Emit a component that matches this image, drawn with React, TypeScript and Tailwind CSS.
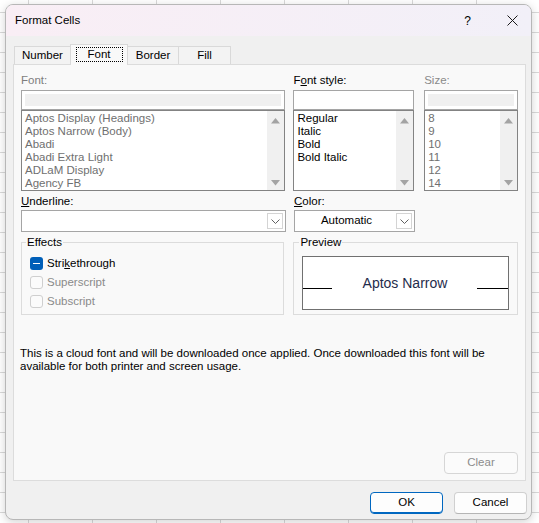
import React from 'react';

const fontItems = [
  'Aptos Display (Headings)',
  'Aptos Narrow (Body)',
  'Abadi',
  'Abadi Extra Light',
  'ADLaM Display',
  'Agency FB',
];
const styleItems = ['Regular', 'Italic', 'Bold', 'Bold Italic'];
const sizeItems = ['8', '9', '10', '11', '12', '14'];

function Arrow({ down }: { down?: boolean }) {
  return (
    <svg width="9" height="6" viewBox="0 0 9 6">
      <path d={down ? 'M0 0 H9 L4.5 5.5 Z' : 'M0 5.5 H9 L4.5 0 Z'} fill="#a3a3a3" />
    </svg>
  );
}

function Chevron() {
  return (
    <svg width="9" height="5" viewBox="0 0 9 5">
      <path d="M0.5 0.5 L4.5 4.5 L8.5 0.5" fill="none" stroke="#606060" strokeWidth="1" />
    </svg>
  );
}

function ListBox({ items, disabled }: { items: string[]; disabled?: boolean }) {
  return (
    <div className="flex h-[81px] border border-[#838383] bg-white">
      <div
        className={`flex-1 pl-[3px] pt-[1px] leading-[13px] ${disabled ? 'text-[#6f6f6f]' : 'text-black'}`}
      >
        {items.map((i) => (
          <div key={i} className="whitespace-nowrap">
            {i}
          </div>
        ))}
      </div>
      <div className="flex w-[17px] flex-col items-center justify-between bg-[#f0f0f0] pb-[4px] pt-[7px]">
        <Arrow />
        <Arrow down />
      </div>
    </div>
  );
}

function Input({ disabled }: { disabled?: boolean }) {
  return (
    <div className="h-[20px] border border-[#a5a5a5] bg-white p-[3px]">
      {disabled && <div className="h-full bg-[#f0f0f0]" />}
    </div>
  );
}

function Check({ label, checked, disabled }: { label: React.ReactNode; checked?: boolean; disabled?: boolean }) {
  return (
    <div className="flex h-[19px] items-center gap-[4px] pl-[8px]">
      {checked ? (
        <div className="flex h-[13px] w-[13px] items-center justify-center rounded-[3px] bg-[#005fb8]">
          <div className="h-[1.5px] w-[7px] bg-white" />
        </div>
      ) : (
        <div className="h-[13px] w-[13px] rounded-[3px] border border-[#cfcfcf] bg-[#fbfbfb]" />
      )}
      <span className={disabled ? 'text-[#8a8a8a]' : 'text-black'}>{label}</span>
    </div>
  );
}

function Tab({ label, active, first }: { label: string; active?: boolean; first?: boolean }) {
  if (active) {
    return (
      <div className="relative z-10 -mb-px -ml-px flex h-[21px] w-[58px] items-center justify-center border-l border-r border-t border-[#d9d9d9] bg-[#f9f9f9] pb-px">
        <span className="flex h-[15px] w-[47px] items-center justify-center border border-dotted border-black leading-none">
          {label}
        </span>
      </div>
    );
  }
  return (
    <div
      className={`flex h-[18px] items-center justify-center border-r border-t border-[#d9d9d9] bg-[#f3f3f3] ${first ? 'w-[57px] border-l' : 'w-[52px]'}`}
    >
      {label}
    </div>
  );
}

export default function App() {
  return (
    <div className="h-[523px] w-[539px] overflow-hidden bg-white bg-[linear-gradient(to_right,#d9d9d9_1px,transparent_1px),linear-gradient(to_bottom,#d9d9d9_1px,transparent_1px)] pl-[5px] pt-[4px] font-['Liberation_Sans',Arial,sans-serif] text-[11.5px] text-black [background-position:28px_12px] [background-size:64px_20px]">
      <div className="flex h-[516px] w-[527px] flex-col overflow-hidden rounded-[8px] border border-[#b7b7b7] bg-[#f0f0f0] shadow-[0_2px_10px_rgba(0,0,0,0.18)]">
        {/* title bar */}
        <div className="flex h-[31px] shrink-0 items-center bg-[linear-gradient(to_right,#f9eef5,#f2f0f8)] pl-[9px] pr-[13px]">
          <span className="flex-1 text-[11.5px]">Format Cells</span>
          <span className="mr-[36px] text-[12px]">?</span>
          <svg width="11" height="11" viewBox="0 0 11 11">
            <path d="M0.5 0.5 L10.5 10.5 M10.5 0.5 L0.5 10.5" stroke="#1a1a1a" strokeWidth="1" />
          </svg>
        </div>

        {/* tabs */}
        <div className="ml-[8px] mt-[8px] flex h-[20px] items-end">
          <Tab label="Number" first />
          <Tab label="Font" active />
          <div className="flex h-[18px] w-[51px] items-center justify-center border-r border-t border-[#d9d9d9] bg-[#f3f3f3]">
            Border
          </div>
          <Tab label="Fill" />
        </div>

        {/* tab panel */}
        <div className="ml-[7px] flex h-[417px] w-[513px] flex-col border border-[#dcdcdc] bg-[#f9f9f9] pl-[7px] pr-[7px] pt-[7px]">
          <div className="flex">
            <div className="w-[265px]">
              <div className="h-[16px] leading-[16px] text-[#7d7d7d]">Font:</div>
              <div className="mt-[2px]">
                <Input disabled />
              </div>
              <ListBox items={fontItems} disabled />
            </div>
            <div className="ml-[8px] w-[121px]">
              <div className="h-[16px] leading-[16px]">
                F<u className="underline-offset-[1px]">o</u>nt style:
              </div>
              <div className="mt-[2px]">
                <Input />
              </div>
              <ListBox items={styleItems} />
            </div>
            <div className="ml-[10px] w-[94px]">
              <div className="h-[16px] leading-[16px] text-[#8a8a8a]">Size:</div>
              <div className="mt-[2px]">
                <Input disabled />
              </div>
              <ListBox items={sizeItems} disabled />
            </div>
          </div>

          {/* underline / color */}
          <div className="mt-[2px] flex">
            <div className="w-[265px]">
              <div className="h-[16px] leading-[16px]">
                <u className="underline-offset-[1px]">U</u>nderline:
              </div>
              <div className="mt-[1px] flex h-[22px] border border-[#a5a5a5] bg-white p-[2px]">
                <div className="flex-1" />
                <div className="flex w-[16px] items-center justify-center border border-[#d4d4d4]">
                  <Chevron />
                </div>
              </div>
            </div>
            <div className="ml-[8px] w-[121px]">
              <div className="h-[16px] leading-[16px]">
                <u className="underline-offset-[1px]">C</u>olor:
              </div>
              <div className="mt-[1px] flex h-[22px] border border-[#a5a5a5] bg-white p-[2px]">
                <div className="flex flex-1 items-center justify-center">Automatic</div>
                <div className="flex w-[16px] items-center justify-center border border-[#d4d4d4]">
                  <Chevron />
                </div>
              </div>
            </div>
          </div>

          {/* effects / preview */}
          <div className="mt-[10px] flex">
            <div className="relative h-[73px] w-[264px] border border-[#dcdcdc] pt-[11px]">
              <span className="absolute -top-[8px] left-[4px] bg-[#f9f9f9] px-[1px] leading-[14px]">Effects</span>
              <Check
                checked
                label={
                  <>
                    Stri<u className="underline-offset-[1px]">k</u>ethrough
                  </>
                }
              />
              <Check label="Superscript" disabled />
              <Check label="Subscript" disabled />
            </div>
            <div className="relative ml-[9px] h-[73px] w-[225px] border border-[#dcdcdc] pl-[8px] pt-[13px]">
              <span className="absolute -top-[8px] left-[5px] bg-[#f9f9f9] px-[1px] leading-[14px]">Preview</span>
              <div className="flex h-[54px] w-[207px] items-center border border-[#707070] bg-white">
                <div className="mt-[10px] h-px w-[29px] bg-black" />
                <div className="flex-1 text-center text-[14px] text-[#1f2c4c]">Aptos Narrow</div>
                <div className="mt-[10px] h-px w-[31px] bg-black" />
              </div>
            </div>
          </div>

          {/* message */}
          <div className="ml-[-1px] mt-[32px] whitespace-nowrap leading-[13px]">
            This is a cloud font and will be downloaded once applied. Once downloaded this font will be
            <br />
            available for both printer and screen usage.
          </div>

          <div className="mt-auto flex justify-end pb-[6px]">
            <div className="flex h-[22px] w-[74px] items-center justify-center rounded-[4px] border border-[#d6d6d6] bg-[#fbfbfb] text-[#8c8c8c]">
              Clear
            </div>
          </div>
        </div>

        {/* buttons */}
        <div className="mr-[4px] mt-[11px] flex justify-end gap-[11px]">
          <button className="flex h-[22px] w-[73px] items-center justify-center rounded-[4px] border border-[#0067c0] bg-[#fdfdfd] shadow-[inset_0_-1px_0_#0067c0]">
            OK
          </button>
          <button className="flex h-[22px] w-[73px] items-center justify-center rounded-[4px] border border-[#d0d0d0] border-b-[#b5b5b5] bg-[#fdfdfd]">
            Cancel
          </button>
        </div>
      </div>
    </div>
  );
}
